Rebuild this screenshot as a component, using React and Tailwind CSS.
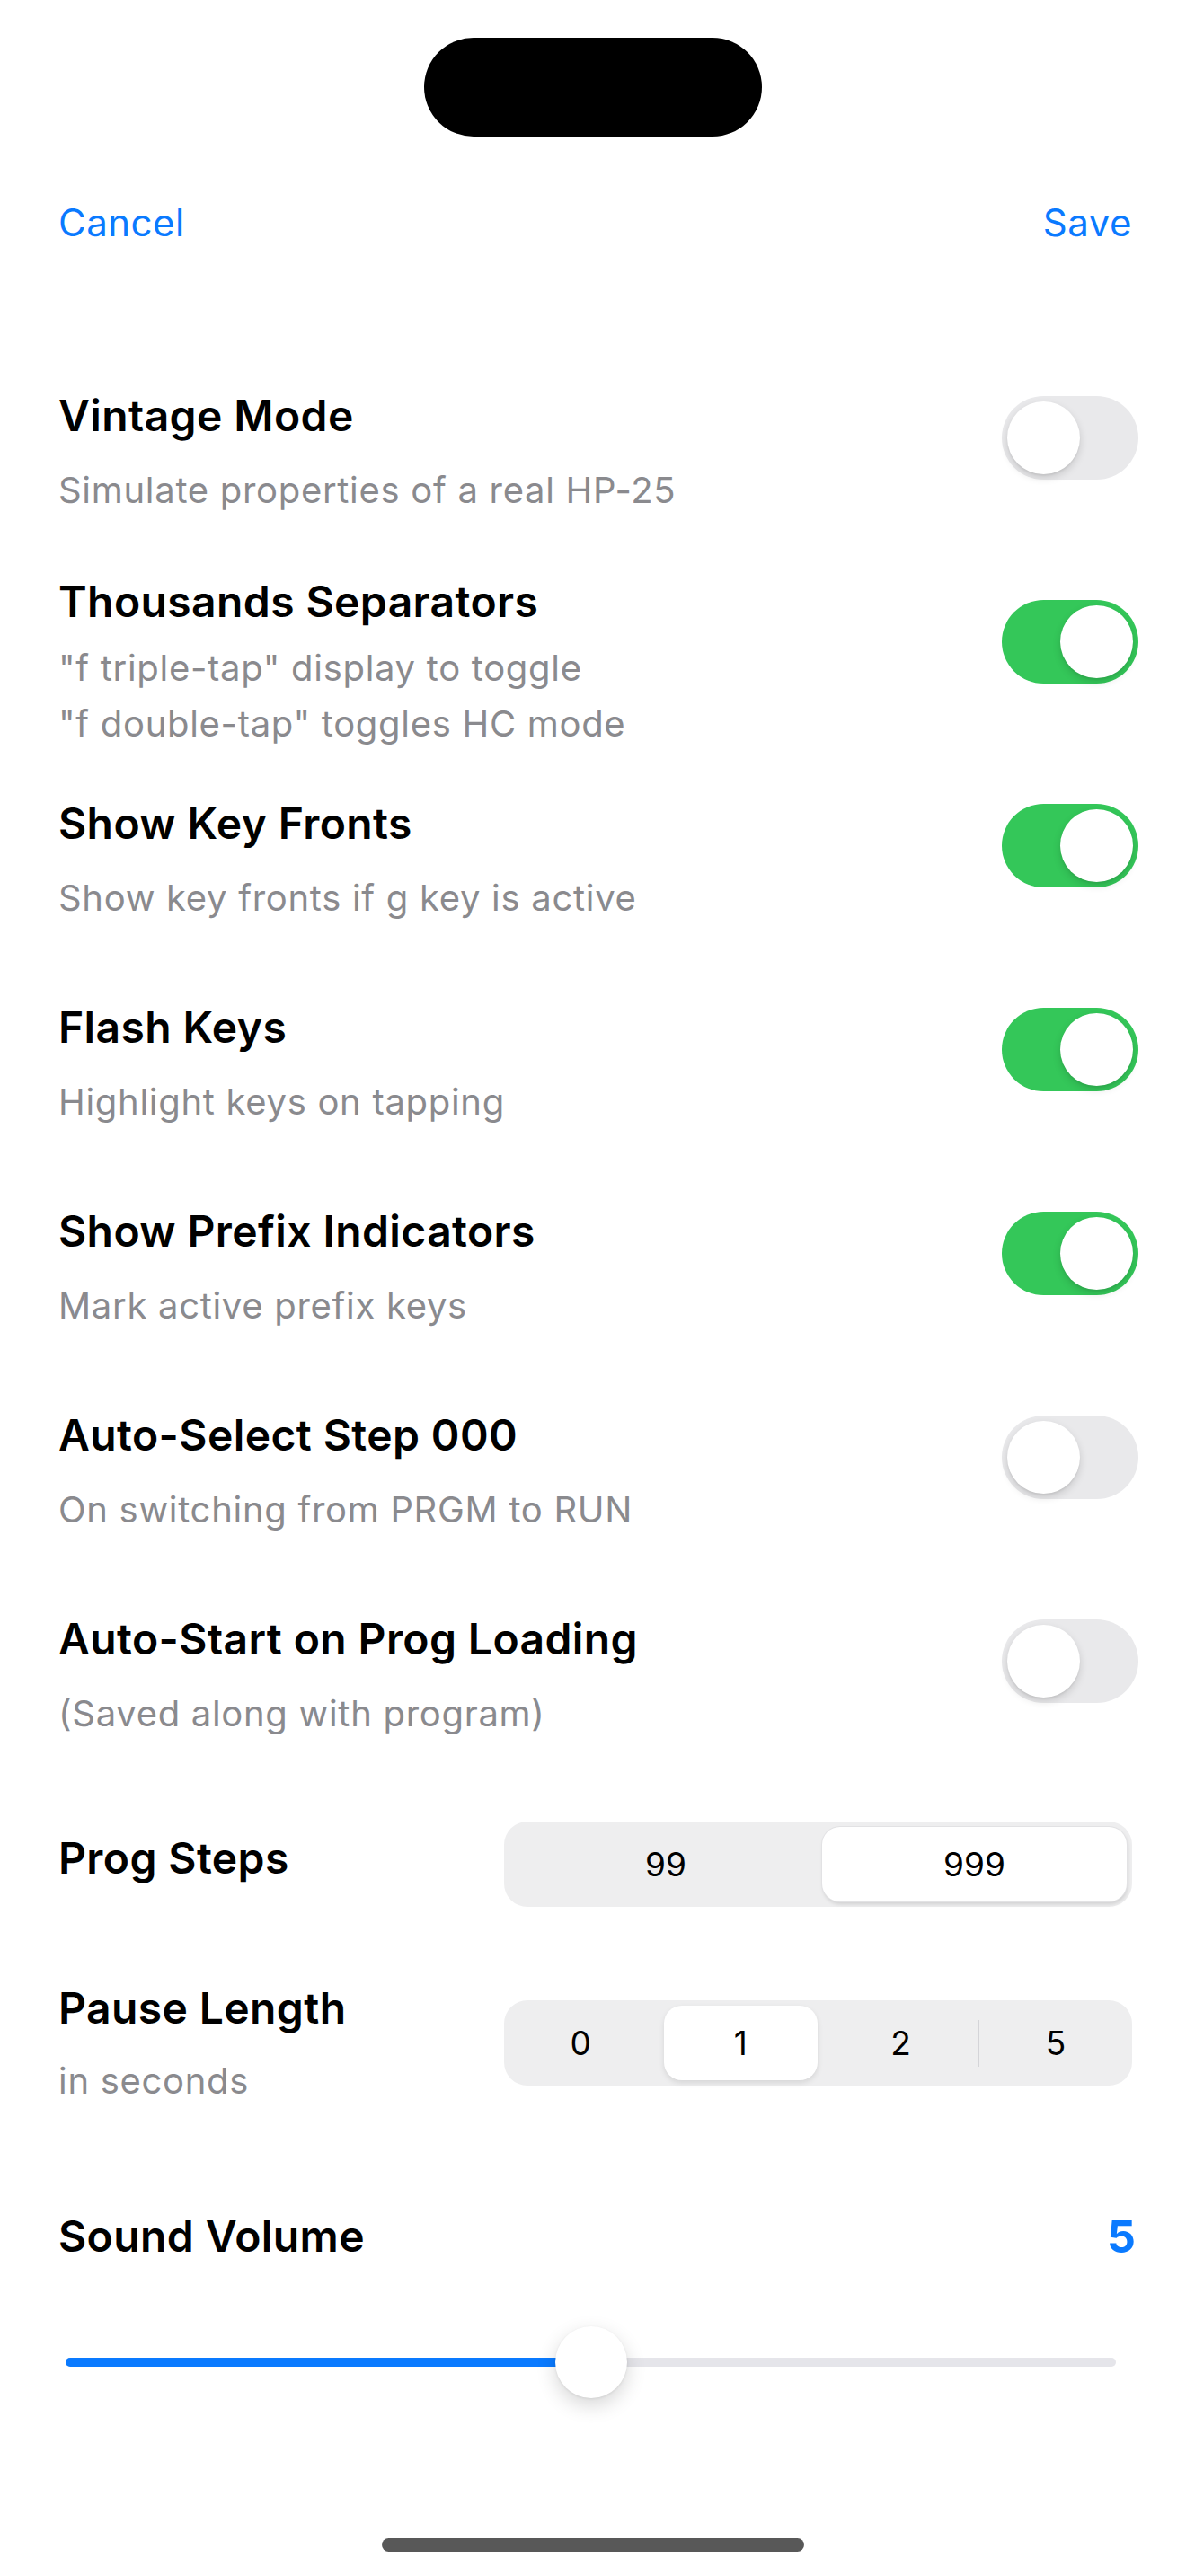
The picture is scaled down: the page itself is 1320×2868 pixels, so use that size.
import React from "react";

const rows = [
  { title: "Vintage Mode", subs: ["Simulate properties of a real HP-25"], on: false },
  { title: "Thousands Separators", subs: ['"f triple-tap" display to toggle', '"f double-tap" toggles HC mode'], on: true },
  { title: "Show Key Fronts", subs: ["Show key fronts if g key is active"], on: true },
  { title: "Flash Keys", subs: ["Highlight keys on tapping"], on: true },
  { title: "Show Prefix Indicators", subs: ["Mark active prefix keys"], on: true },
  { title: "Auto-Select Step 000", subs: ["On switching from PRGM to RUN"], on: false },
  { title: "Auto-Start on Prog Loading", subs: ["(Saved along with program)"], on: false },
];

function Toggle({ on }) {
  return (
    <div
      className={
        "mt-[66px] w-[152px] h-[93px] rounded-full p-[6px] flex shrink-0 " +
        (on ? "bg-[#34c759] justify-end" : "bg-[#e9e9eb] justify-start")
      }
    >
      <div className="w-[81px] h-[81px] rounded-full bg-white shadow-[0_4px_10px_rgba(0,0,0,0.14),0_2px_2px_rgba(0,0,0,0.05)]" />
    </div>
  );
}

function ToggleRow({ title, subs, on }) {
  const multi = subs.length > 1;
  return (
    <div className="h-[227px] flex items-start justify-between pl-[65px] pr-[53px]">
      <div className={"flex flex-col " + (multi ? "pt-[40px]" : "pt-[60px]")}>
        <div className="text-[48px] leading-[56px] font-semibold text-black tracking-[0.4px]">{title}</div>
        <div className={"flex flex-col " + (multi ? "mt-[15px]" : "mt-[24px]")}>
          {subs.map((s) => (
            <div key={s} className="text-[40px] leading-[62px] tracking-[0.7px] text-[#8a8a8e]">
              {s}
            </div>
          ))}
        </div>
      </div>
      <Toggle on={on} />
    </div>
  );
}

export default function App() {
  return (
    <div className="relative w-[1320px] h-[2868px] bg-white overflow-hidden font-['Inter','Liberation_Sans',sans-serif]">
      {/* Dynamic island */}
      <div className="flex justify-center pt-[42px]">
        <div className="w-[376px] h-[110px] rounded-full bg-black" />
      </div>

      {/* Nav bar */}
      <div className="mt-[65px] h-[60px] flex items-center justify-between pl-[65px] pr-[60px] text-[42px] tracking-[0.5px] text-[#0a7aff]">
        <span>Cancel</span>
        <span>Save</span>
      </div>

      {/* Toggle rows */}
      <div className="mt-[98px] flex flex-col">
        {rows.map((r) => (
          <ToggleRow key={r.title} {...r} />
        ))}
      </div>

      {/* Prog Steps */}
      <div className="mt-[64px] flex items-center justify-between pl-[65px] pr-[60px]">
        <div className="mb-[14px] text-[48px] leading-[56px] font-semibold tracking-[0.4px] text-black">Prog Steps</div>
        <div className="w-[699px] h-[95px] rounded-[26px] bg-[#eeeeef] p-[6px] flex text-[37px] text-black">
          <div className="flex-1 flex items-center justify-center">99</div>
          <div className="w-[339px] flex items-center justify-center rounded-[20px] bg-white shadow-[1px_3px_4px_rgba(0,0,0,0.13)] ring-1 ring-[#e2e2e4]">
            999
          </div>
        </div>
      </div>

      {/* Pause Length */}
      <div className="mt-[85px] flex items-center justify-between pl-[65px] pr-[60px]">
        <div className="flex flex-col">
          <div className="text-[48px] leading-[56px] font-semibold tracking-[0.4px] text-black">Pause Length</div>
          <div className="mt-[29px] text-[40px] leading-[48px] tracking-[0.7px] text-[#8a8a8e]">in seconds</div>
        </div>
        <div className="w-[699px] h-[95px] rounded-[26px] bg-[#eeeeef] py-[6px] flex text-[37px] text-black">
          <div className="flex-1 flex items-center justify-center">0</div>
          <div className="flex-1 flex px-[8px]">
            <div className="flex-1 flex items-center justify-center rounded-[20px] bg-white shadow-[0_3px_6px_rgba(0,0,0,0.1)]">1</div>
          </div>
          <div className="flex-1 flex items-center justify-center">2</div>
          <div className="self-center w-[2px] h-[52px] bg-[#d4d4d8]" />
          <div className="flex-1 flex items-center justify-center">5</div>
        </div>
      </div>

      {/* Sound Volume */}
      <div className="mt-[121px] h-[56px] flex items-center justify-between pl-[65px] pr-[56px]">
        <div className="text-[48px] leading-[56px] font-semibold tracking-[0.4px] text-black">Sound Volume</div>
        <div className="text-[50px] leading-[56px] font-bold text-[#0a7aff]">5</div>
      </div>

      {/* Slider */}
      <div className="mt-[72px] ml-[73px] mr-[78px] relative h-[80px]">
        <div className="absolute left-0 right-0 top-[35px] h-[10px] rounded-full bg-[#e5e5ea]" />
        <div className="absolute left-0 w-1/2 top-[35px] h-[10px] rounded-full bg-[#0a7aff]" />
        <div className="absolute left-1/2 top-0 -translate-x-1/2 w-[80px] h-[80px] rounded-full bg-white shadow-[0_8px_22px_rgba(0,0,0,0.16),0_1px_3px_rgba(0,0,0,0.08)]" />
      </div>

      {/* Home indicator */}
      <div className="absolute bottom-[27px] left-1/2 -translate-x-1/2 w-[470px] h-[15px] rounded-full bg-[#585858]" />
    </div>
  );
}
